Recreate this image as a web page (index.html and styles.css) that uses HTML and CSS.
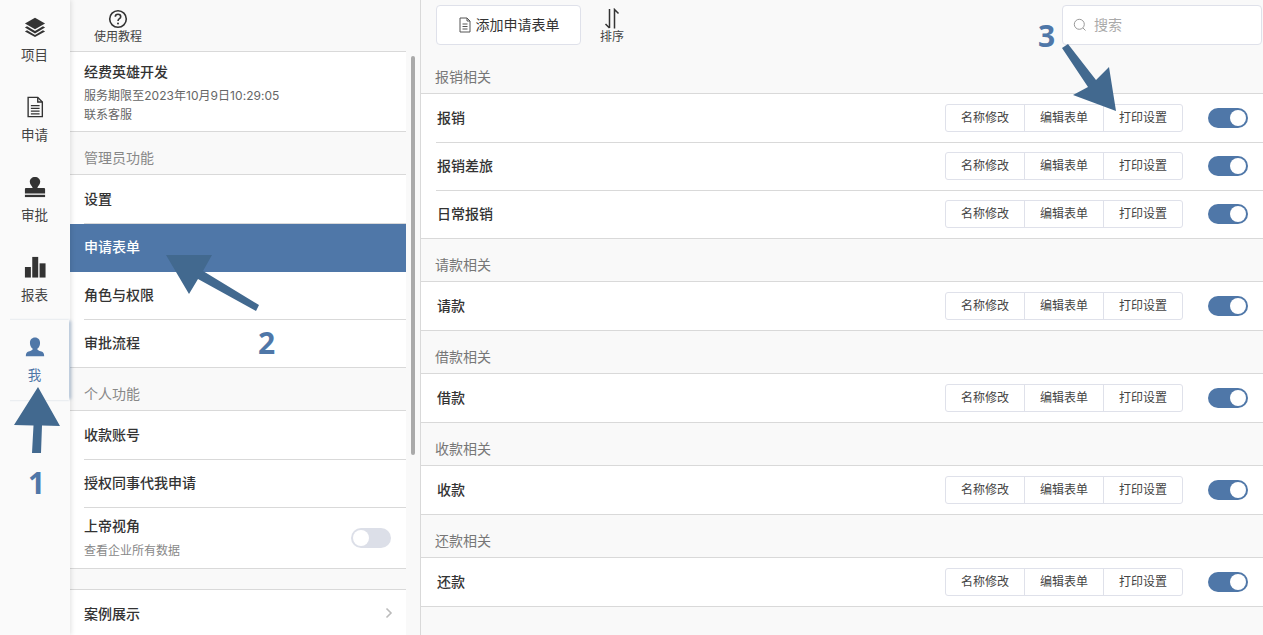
FILE: index.html
```html
<!DOCTYPE html>
<html lang="zh">
<head>
<meta charset="utf-8">
<title>申请表单</title>
<link rel="stylesheet" href="styles.css">
</head>
<body>
<div class="app">
  <nav class="rail">
    <a class="rail-item">
      <svg class="rail-icon" viewBox="0 0 24 24"><path d="M12 2 23 8.200 12 14.400 1 8.200Z"/><path d="M3.300 11.300 1 12.600 12 19 23 12.600 20.700 11.300 12 16.400Z"/><path d="M3.300 15.500 1 16.800 12 23 23 16.800 20.700 15.500 12 20.600Z"/></svg>
      <span>项目</span>
    </a>
    <a class="rail-item">
      <svg class="rail-icon" viewBox="0 0 24 24"><path class="line" d="M4.500 1.500H15L20 6.500V22.500H4.500Z"/><path class="line" d="M15 1.500V6.500H20M7.500 10.500H17M7.500 13.500H17M7.500 16.500H17M7.500 19.500H17"/></svg>
      <span>申请</span>
    </a>
    <a class="rail-item">
      <svg class="rail-icon" viewBox="0 0 24 24"><path d="M12 1C8.700 1 6.300 3.300 6.300 6.300 6.300 9 8.500 10.500 9.500 13H2.500C1.500 13 1 13.500 1 14.500V19H23V14.500C23 13.500 22.500 13 21.500 13H14.500C15.500 10.500 17.700 9 17.700 6.300 17.700 3.300 15.300 1 12 1Z"/><rect x="1" y="20.500" width="22" height="2.500"/></svg>
      <span>审批</span>
    </a>
    <a class="rail-item">
      <svg class="rail-icon" viewBox="0 0 24 24"><rect x="1" y="12" width="6.500" height="11.500"/><rect x="9" y="1" width="6.500" height="22.500"/><rect x="17" y="8" width="6.500" height="15.500"/></svg>
      <span>报表</span>
    </a>
    <a class="rail-item active">
      <svg class="rail-icon" viewBox="0 0 24 24"><path d="M12 1.500C8.500 1.500 6.500 4 6.500 7.500 6.500 10 7.500 12.500 9.500 14 9.500 15.500 8 16 5 17 3 17.700 2 19 2 22H22C22 19 21 17.700 19 17 16 16 14.500 15.500 14.500 14 16.500 12.500 17.500 10 17.500 7.500 17.500 4 15.500 1.500 12 1.500Z"/></svg>
      <span>我</span>
    </a>
  </nav>

  <aside class="side">
    <div class="side-scroll">
      <div class="tutorial">
        <svg class="help" viewBox="0 0 20 20"><circle cx="10" cy="10" r="8.300"/><path d="M7.300 7.800C7.300 6.200 8.500 5.300 10 5.300S12.700 6.200 12.700 7.700C12.700 9.800 10 9.700 10 12"/><circle class="dot" cx="10" cy="14.600" r="1"/></svg>
        <span>使用教程</span>
      </div>
      <div class="company">
        <div class="company-name">经费英雄开发</div>
        <div class="company-note">服务期限至2023年10月9日10:29:05</div>
        <div class="company-note">联系客服</div>
      </div>
      <div class="side-title">管理员功能</div>
      <ul class="menu">
        <li class="menu-item"><span class="menu-text">设置</span></li>
        <li class="menu-item selected"><span class="menu-text">申请表单</span></li>
        <li class="menu-item"><span class="menu-text">角色与权限</span></li>
        <li class="menu-item"><span class="menu-text">审批流程</span></li>
      </ul>
      <div class="side-title">个人功能</div>
      <ul class="menu">
        <li class="menu-item"><span class="menu-text">收款账号</span></li>
        <li class="menu-item"><span class="menu-text">授权同事代我申请</span></li>
        <li class="menu-item tall">
          <div class="menu-text">
            <div>上帝视角</div>
            <div class="menu-sub">查看企业所有数据</div>
          </div>
          <span class="toggle off"></span>
        </li>
      </ul>
      <div class="menu-gap"></div>
      <ul class="menu last">
        <li class="menu-item"><span class="menu-text">案例展示</span>
          <svg class="chev" viewBox="0 0 8 12"><path d="M1.500 1.500 6 6 1.500 10.500"/></svg>
        </li>
      </ul>
    </div>
    <div class="scrollbar"><div class="thumb"></div></div>
  </aside>

  <main class="main">
    <header class="toolbar">
      <button class="add-btn">
        <svg class="doc-small" viewBox="0 0 14 16"><path d="M2 1H9L12 4V15H2ZM9 1V4H12M4.500 7H9.500M4.500 9.500H9.500M4.500 12H9.500"/></svg>
        <span class="btn-text">添加申请表单</span>
      </button>
      <div class="sort">
        <svg class="sort-icon" viewBox="0 0 18 21"><path d="M6.500 1V20M6.500 20 2.500 16M11.500 20.500V1.500L15.500 5.500"/></svg>
        <span>排序</span>
      </div>
      <label class="search">
        <svg class="search-icon" viewBox="0 0 14 14"><circle cx="6.300" cy="6.300" r="5"/><path d="M10 10 12.500 12.500"/></svg>
        <span class="btn-text">搜索</span>
      </label>
    </header>

    <section class="group">
      <h2 class="group-title">报销相关</h2>
      <div class="rows">
        <div class="row"><span class="row-name">报销</span><div class="btns"><span>名称修改</span><span>编辑表单</span><span>打印设置</span></div><span class="toggle"></span></div>
        <div class="row"><span class="row-name">报销差旅</span><div class="btns"><span>名称修改</span><span>编辑表单</span><span>打印设置</span></div><span class="toggle"></span></div>
        <div class="row"><span class="row-name">日常报销</span><div class="btns"><span>名称修改</span><span>编辑表单</span><span>打印设置</span></div><span class="toggle"></span></div>
      </div>
    </section>
    <section class="group">
      <h2 class="group-title">请款相关</h2>
      <div class="rows">
        <div class="row"><span class="row-name">请款</span><div class="btns"><span>名称修改</span><span>编辑表单</span><span>打印设置</span></div><span class="toggle"></span></div>
      </div>
    </section>
    <section class="group">
      <h2 class="group-title">借款相关</h2>
      <div class="rows">
        <div class="row"><span class="row-name">借款</span><div class="btns"><span>名称修改</span><span>编辑表单</span><span>打印设置</span></div><span class="toggle"></span></div>
      </div>
    </section>
    <section class="group">
      <h2 class="group-title">收款相关</h2>
      <div class="rows">
        <div class="row"><span class="row-name">收款</span><div class="btns"><span>名称修改</span><span>编辑表单</span><span>打印设置</span></div><span class="toggle"></span></div>
      </div>
    </section>
    <section class="group">
      <h2 class="group-title">还款相关</h2>
      <div class="rows">
        <div class="row"><span class="row-name">还款</span><div class="btns"><span>名称修改</span><span>编辑表单</span><span>打印设置</span></div><span class="toggle"></span></div>
      </div>
    </section>
  </main>

  <svg class="arrows" viewBox="0 0 1263 635">
    <path d="M38 387 60 426 42 425.500 41 453 32 453 33.500 425.500 14 425Z"/>
    <path d="M166 255H212L203 271 259 305 256 311 198 279 189 294Z"/>
    <path d="M1116 111 1073 95 1088 87 1062 48 1068 44 1096 80 1109 67Z"/>
  </svg>
  <span class="step step-1">1</span>
  <span class="step step-2">2</span>
  <span class="step step-3">3</span>
</div>
</body>
</html>
```

FILE: styles.css
```css
* { box-sizing: border-box; }

html, body {
  margin: 0;
  height: 635px;
  overflow: hidden;
}

body {
  font-family: Inter, "Noto Sans CJK SC", sans-serif;
  font-size: 14px;
  color: #333;
  background: #f9f9f9;
}

ul { list-style: none; margin: 0; padding: 0; }

.app {
  position: relative;
  display: flex;
  height: 635px;
  overflow: hidden;
}

/* left rail */
.rail {
  position: relative;
  z-index: 2;
  flex: 0 0 70px;
  width: 70px;
  height: 635px;
  padding-right: 1px;
  background: #fafafa;
  box-shadow: 1px 0 5px rgba(0, 0, 0, .12);
}

.rail-item {
  display: flex;
  flex-direction: column;
  align-items: center;
  height: 80px;
  padding-top: 16px;
  font-size: 13.500px;
  line-height: 18px;
  color: #444;
}

.rail-icon {
  display: block;
  width: 22px;
  height: 22px;
  margin-bottom: 8px;
  fill: #333;
}

.rail-item .line {
  fill: none;
  stroke: #333;
  stroke-width: 1.500;
}

.rail-item.active {
  color: #4f77a8;
  box-shadow: 3px 0 3px -1px rgba(79, 119, 168, .4), 0 1px 1px -1px rgba(0, 0, 0, .08), 0 -1px 1px -1px rgba(0, 0, 0, .08);
  clip-path: inset(-2px -8px -2px 10px);
}

.rail-item.active .rail-icon { fill: #4f77a8; }

/* sidebar */
.side {
  flex: 0 0 351px;
  display: flex;
  height: 635px;
  border-right: 1px solid #d9d9d9;
  background: #f9f9f9;
}

.side-scroll {
  flex: 0 0 336px;
  width: 336px;
}

.scrollbar {
  flex: 1;
  padding: 56px 0 0 5px;
}

.thumb {
  width: 4px;
  height: 399px;
  border-radius: 2px;
  background: #aaa;
}

.tutorial {
  display: flex;
  flex-direction: column;
  align-items: flex-start;
  height: 52px;
  padding: 9px 0 0 24px;
  font-size: 12px;
  line-height: 16px;
  color: #444;
  border-bottom: 1px solid #d9d9d9;
}

.help {
  width: 20px;
  height: 20px;
  margin-left: 14px;
  fill: none;
  stroke: #333;
  stroke-width: 1.600;
}

.help .dot { fill: #333; stroke: none; }

.company {
  height: 80px;
  padding: 9px 14px;
  background: #fff;
  border-bottom: 1px solid #d9d9d9;
}

.company-name {
  font-weight: 500;
  line-height: 22px;
  margin-bottom: 3px;
}

.company-note {
  font-size: 12px;
  line-height: 19px;
  letter-spacing: .04px;
  color: #666;
}

.side-title {
  height: 43px;
  padding: 16px 14px 0;
  line-height: 20px;
  color: #888;
  border-bottom: 1px solid #d9d9d9;
}

.menu {
  background: #fff;
  padding-left: 14px;
}

.menu-item {
  display: flex;
  align-items: center;
  justify-content: space-between;
  height: 48px;
  font-weight: 500;
  border-bottom: 1px solid #d9d9d9;
}

.menu-item:first-child { height: 49px; }

.menu-text { margin-top: -4px; }

.menu-item:first-child .menu-text { margin-top: -2px; }

.menu-item:last-child {
  margin-left: -14px;
  padding-left: 14px;
}

.menu-item.selected {
  margin-left: -14px;
  padding-left: 14px;
  color: #fff;
  background: #4f77a8;
  border-bottom: 0;
}

.menu-item.tall {
  height: 61px;
  padding-right: 15px;
}

.menu-item.tall .menu-text { margin-top: -2px; }

.menu-sub {
  margin-top: 7px;
  font-size: 12px;
  font-weight: 400;
  line-height: 17px;
  color: #888;
}

.menu-gap { height: 20px; }

.menu.last {
  border-top: 1px solid #d9d9d9;
}

.menu.last .menu-item {
  border-bottom: 0;
  height: 46px;
  padding-right: 13px;
}

.menu.last .menu-text { margin-top: 0; }

.chev {
  width: 8px;
  height: 12px;
  fill: none;
  stroke: #bbb;
  stroke-width: 1.600;
}

/* main */
.main {
  flex: 1;
  min-width: 0;
}

.toolbar {
  display: flex;
  align-items: flex-start;
  height: 51px;
  padding: 5px 1px 0 15px;
}

.add-btn {
  display: flex;
  align-items: center;
  justify-content: center;
  gap: 4px;
  width: 145px;
  height: 40px;
  padding: 0;
  font: inherit;
  color: #333;
  background: #fff;
  border: 1px solid #dfe1ea;
  border-radius: 4px;
}

.btn-text { margin-top: -2px; }

.doc-small {
  width: 14px;
  height: 16px;
  fill: none;
  stroke: #555;
  stroke-width: 1;
}

.sort {
  display: flex;
  flex-direction: column;
  align-items: center;
  margin: 3px 0 0 19px;
  font-size: 12px;
  line-height: 14px;
  color: #444;
}

.sort-icon {
  width: 18px;
  height: 21px;
  margin-bottom: 1px;
  fill: none;
  stroke: #333;
  stroke-width: 1.500;
}

.search {
  display: flex;
  align-items: center;
  gap: 7px;
  width: 200px;
  height: 40px;
  margin-left: auto;
  padding-left: 10px;
  color: #aaa;
  font-size: 14px;
  background: #fff;
  border: 1px solid #dfe1ea;
  border-radius: 4px;
}

.search-icon {
  width: 14px;
  height: 14px;
  fill: none;
  stroke: #999;
  stroke-width: 1;
}

.group-title {
  height: 43px;
  margin: 0;
  padding: 16px 14px 0;
  font-size: 14px;
  font-weight: 400;
  line-height: 20px;
  color: #777;
  border-bottom: 1px solid #d9d9d9;
}

.rows {
  padding-left: 15px;
  background: #fff;
  border-bottom: 1px solid #d9d9d9;
}

.row {
  display: flex;
  align-items: center;
  height: 48px;
  padding-right: 15px;
}

.row + .row {
  padding-bottom: 1px;
  border-top: 1px solid #d9d9d9;
}

.row-name {
  margin-right: auto;
  margin-top: -2px;
  padding-left: 1px;
  font-weight: 500;
}

.btns {
  display: flex;
  height: 28px;
  margin-right: 25px;
  background: #fff;
  border: 1px solid #dfe1ea;
  border-radius: 3px;
  font-size: 12px;
  color: #444;
}

.btns span {
  display: flex;
  align-items: center;
  justify-content: center;
  width: 79px;
  line-height: 26px;
}

.btns span:first-child { width: 78px; }

.btns span + span { border-left: 1px solid #dfe1ea; }

/* toggle */
.toggle {
  position: relative;
  flex: none;
  display: block;
  width: 40px;
  height: 20px;
  border-radius: 10px;
  background: #4f77a8;
}

.toggle::after {
  content: "";
  position: absolute;
  top: 2px;
  right: 2px;
  width: 16px;
  height: 16px;
  border-radius: 50%;
  background: #fff;
}

.toggle.off { background: #dcdfe8; }

.toggle.off::after {
  right: auto;
  left: 2px;
}

/* annotations */
.arrows {
  position: absolute;
  z-index: 5;
  left: 0;
  top: 0;
  width: 1263px;
  height: 635px;
  fill: #42698f;
  pointer-events: none;
}

.step {
  position: absolute;
  z-index: 6;
  font-family: "Open Sans", sans-serif;
  font-size: 30px;
  font-weight: 700;
  line-height: 36px;
  color: #4f77a8;
}

.step-1 { left: 28px; top: 465px; }
.step-2 { left: 258px; top: 325px; }
.step-3 { left: 1038px; top: 18px; }
```
